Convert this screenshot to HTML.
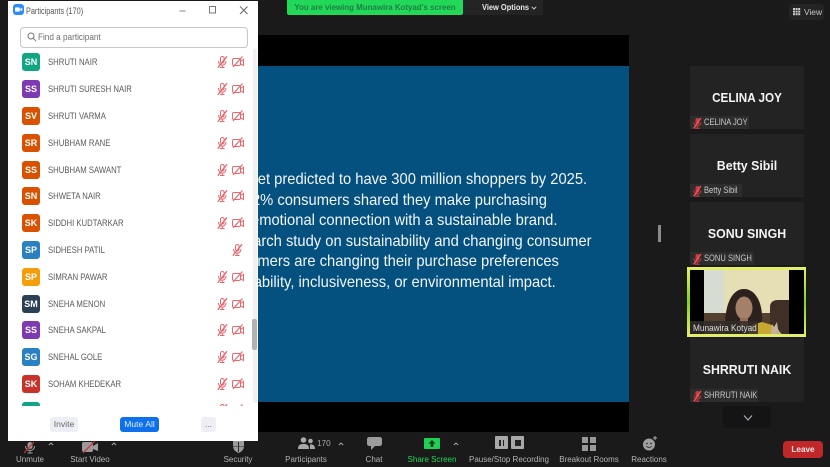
<!DOCTYPE html>
<html>
<head>
<meta charset="utf-8">
<style>
html,body{margin:0;padding:0;width:830px;height:467px;overflow:hidden;background:#1a1a1a;font-family:"Liberation Sans",sans-serif}
div,span{position:absolute;white-space:nowrap}
svg{position:absolute;overflow:visible}
.av{left:14px;width:18px;height:18px;border-radius:3px;color:#fff;font-weight:bold;font-size:9px;line-height:18px;text-align:center;filter:blur(.2px)}
.nm{left:39.5px;font-size:9px;line-height:12px;color:#5a5a5a;filter:blur(.2px);transform:scaleX(.86);transform-origin:left center}
.ln{right:0;color:#f2f6f9;font-size:15.8px;line-height:20px;filter:blur(.25px);transform:scaleX(.933);transform-origin:right center}
.tile{left:690px;width:114px;background:#232323}
.big{left:0;width:114px;text-align:center;color:#f4f4f4;font-weight:bold;font-size:13px;line-height:16px;filter:blur(.2px);transform:scaleX(.95)}
.lab{left:0;bottom:0;height:13px;background:#2d2d2d;color:#c8c8c8;font-size:9px;line-height:13px}
.lab span{left:14px;top:0;transform:scaleX(.84);transform-origin:left center;filter:blur(.15px)}
.tb{top:454px;font-size:8.6px;line-height:11px;color:#b4b4b4;transform:translateX(-50%) scaleX(.93);filter:blur(.2px)}
</style>
</head>
<body>
<svg width="0" height="0" style="position:absolute">
<defs>
<g id="m" fill="none" stroke="#e8666c" stroke-width="1"><rect x="3.5" y="0.5" width="3.6" height="6.5" rx="1.8"/><path d="M1.5 5c0 5.600 7.500 5.600 7.500 0M5.300 9v2.500M3 11.500h4.500"/><path d="M10 .3L.8 11.700" stroke-width="1.300"/></g>
<g id="c" fill="none" stroke="#e8666c" stroke-width="1"><rect x="0.500" y="2.500" width="8" height="7" rx="1.500"/><path d="M8.500 5.500l3-2.200v6.200l-3-1.800"/><path d="M10.500 .5L1 11" stroke-width="1.200"/></g>
<g id="rm"><rect x="2.500" y="0" width="3.800" height="6.500" rx="1.900" fill="#d8383c"/><path d="M1 4.500c0 4.500 6.800 4.500 6.800 0M4.400 8v2M2.200 10.300h4.400" fill="none" stroke="#d8383c" stroke-width="1"/><path d="M7.800 0L.8 10.300" stroke="#e8555a" stroke-width="1.400"/></g>
</defs>
</svg>

<!-- slide -->
<div style="left:258px;top:35px;width:371px;height:397px;background:#000"></div>
<div style="left:258px;top:66px;width:371px;height:336px;background:#04507f"></div>
<div style="left:0;top:0;width:587px;height:467px;overflow:hidden"><div class="ln" style="top:170px">market predicted to have 300 million shoppers by 2025.</div></div>
<div style="left:0;top:0;width:546.500px;height:467px;overflow:hidden"><div class="ln" style="top:190.500px">72% consumers shared they make purchasing</div></div>
<div style="left:0;top:0;width:557px;height:467px;overflow:hidden"><div class="ln" style="top:211px">emotional connection with a sustainable brand.</div></div>
<div style="left:0;top:0;width:592px;height:467px;overflow:hidden"><div class="ln" style="top:231.500px">Research study on sustainability and changing consumer</div></div>
<div style="left:0;top:0;width:558.500px;height:467px;overflow:hidden"><div class="ln" style="top:252px">customers are changing their purchase preferences</div></div>
<div style="left:0;top:0;width:556px;height:467px;overflow:hidden"><div class="ln" style="top:273px">sustainability, inclusiveness, or environmental impact.</div></div>

<!-- top bar -->
<div style="left:287px;top:0;width:176px;height:15px;background:#22d859;border-radius:0 0 2px 2px"></div>
<div style="left:287px;top:0;width:176px;height:14px;color:#1f7f42;font-weight:bold;font-size:8.600px;line-height:14px;text-align:center;transform:scaleX(.92);filter:blur(.2px)">You are viewing Munawira Kotyad's screen</div>
<div style="left:463px;top:0;width:80px;height:15px;background:#242424"></div>
<div style="left:481.500px;top:1px;color:#e6e6e6;font-weight:bold;font-size:8.400px;line-height:12px;filter:blur(.15px);transform:scaleX(.89);transform-origin:left center">View Options</div>
<svg style="left:531px;top:5.500px" width="6" height="4"><path d="M.8.8L3 3l2.200-2.200" fill="none" stroke="#ccc" stroke-width="1"/></svg>
<div style="left:789px;top:4px;width:35px;height:16px;background:#242424;border-radius:3px"></div>
<svg style="left:793px;top:8px" width="8" height="7"><g fill="#ccc"><rect width="2" height="2"/><rect x="2.600" width="2" height="2"/><rect x="5.200" width="2" height="2"/><rect y="2.600" width="2" height="2"/><rect x="2.600" y="2.600" width="2" height="2"/><rect x="5.200" y="2.600" width="2" height="2"/><rect y="5.200" width="2" height="2"/><rect x="2.600" y="5.200" width="2" height="2"/><rect x="5.200" y="5.200" width="2" height="2"/></g></svg>
<div style="left:804px;top:6px;color:#c8c8c8;font-size:8.400px;line-height:12px">View</div>

<!-- gallery -->
<div style="left:657.500px;top:225px;width:3px;height:17px;background:#8a8a8a"></div>
<div class="tile" style="top:66px;height:63px"><div class="big" style="top:23.500px;transform:scaleX(.9)">CELINA JOY</div><div class="lab" style="width:59px"><span>CELINA JOY</span></div><svg style="left:3px;top:51.500px" width="9" height="11"><use href="#rm"/></svg></div>
<div class="tile" style="top:134px;height:63px"><div class="big" style="top:23.500px">Betty Sibil</div><div class="lab" style="width:52px"><span>Betty Sibil</span></div><svg style="left:3px;top:51.500px" width="9" height="11"><use href="#rm"/></svg></div>
<div class="tile" style="top:202px;height:63px"><div class="big" style="top:23.500px">SONU SINGH</div><div class="lab" style="width:64px"><span>SONU SINGH</span></div><svg style="left:3px;top:51.500px" width="9" height="11"><use href="#rm"/></svg></div>
<div class="tile" style="top:338px;height:64px"><div class="big" style="top:24px">SHRRUTI NAIK</div><div class="lab" style="width:68px"><span>SHRRUTI NAIK</span></div><svg style="left:3px;top:52.500px" width="9" height="11"><use href="#rm"/></svg></div>

<!-- active video -->
<div style="left:687px;top:267px;width:119px;height:70px;background:linear-gradient(#e6f06a,#7fd420 50%,#e6f06a)"></div>
<div style="left:690px;top:270px;width:114px;height:64px;background:#000;overflow:hidden">
  <svg style="left:14px;top:0" width="85" height="64" viewBox="0 0 85 64">
    <rect width="85" height="64" fill="#e6dfb6"/>
    <rect width="20" height="44" fill="#d6dcd2"/>
    <path d="M0 43H85V64H0z" fill="#54402f"/>
    <path d="M66 36q1-6 8-6h11V64H66z" fill="#3f2f26"/>
    <path d="M22 64C19 40 26 19 40 19 53 19 59 36 58 50L60 64z" fill="#2c211f"/>
    <ellipse cx="40" cy="38" rx="8.500" ry="11.500" fill="#a67f69"/>
    <path d="M36 48h8v8h-8z" fill="#96705c"/>
    <path d="M44 64L47 55 58 52 68 55 78 64z" fill="#c9a832"/>
    <path d="M67 64l1-10 2 3 3-5 1 7 3 5z" fill="#c4b19e"/>
  </svg>
  <div style="left:0;bottom:0;height:13px;width:68px;background:rgba(50,45,40,.85)"></div>
  <div style="left:2.500px;bottom:0;height:13px;color:#ddd;font-size:9.400px;line-height:13px;transform:scaleX(.88);transform-origin:left center;filter:blur(.15px)">Munawira Kotyad</div>
</div>

<div style="left:723px;top:406px;width:48px;height:22px;background:#141414;border-radius:3px"></div>
<svg style="left:741.500px;top:414px" width="12" height="8"><path d="M2 1.500L6 6 10 1.500" fill="none" stroke="#aab" stroke-width="1.200"/></svg>

<!-- participants panel -->
<div style="left:8px;top:1px;width:250px;height:440px;background:#fff;overflow:hidden">
  <svg style="left:5px;top:3px" width="11" height="11" viewBox="0 0 11 11"><rect width="11" height="11" rx="3" fill="#2d8cff"/><rect x="2" y="3.400" width="4.800" height="4.200" rx="1" fill="#fff"/><path d="M7.200 5L9.200 3.600V7.400L7.200 6z" fill="#fff"/></svg>
  <div style="left:17.500px;top:3.500px;font-size:9px;line-height:12px;color:#555;transform:scaleX(.81);transform-origin:left center">Participants (170)</div>
  <svg style="left:171px;top:4px" width="70" height="12"><path d="M.5 6h6" stroke="#999" stroke-width="1.200"/><rect x="30.500" y="1.500" width="6" height="6.500" fill="none" stroke="#777" stroke-width="1"/><path d="M61 1.500l7.500 7.500M68.500 1.500L61 9" stroke="#666" stroke-width="1"/></svg>
  <div style="left:12px;top:26px;width:226px;height:19px;border:1px solid #c4c6d0;border-radius:4px;background:#fff"></div>
  <svg style="left:19px;top:31px" width="10" height="10"><circle cx="4" cy="4" r="3" fill="none" stroke="#777" stroke-width="1"/><path d="M6.200 6.200L9 9" stroke="#777" stroke-width="1"/></svg>
  <div style="left:30px;top:30px;font-size:9.200px;line-height:12px;color:#6e6e6e;transform:scaleX(.89);transform-origin:left center">Find a participant</div>
  <div style="left:244.500px;top:48px;width:4px;height:354px;background:#f1f1f3"></div>
  <div style="left:244px;top:318px;width:5px;height:31px;background:#b3b3b3;border-radius:2px"></div>

  <div style="left:0;top:47px;width:244px;height:358px;overflow:hidden">
    <div class="av" style="top:5px;background:#11a583">SN</div><div class="nm" style="top:8px">SHRUTI NAIR</div>
    <svg style="left:209px;top:8px" width="12" height="12"><use href="#m"/></svg><svg style="left:224px;top:8px" width="12" height="12"><use href="#c"/></svg>
    <div class="av" style="top:32px;background:#7e3ab2">SS</div><div class="nm" style="top:35px">SHRUTI SURESH NAIR</div>
    <svg style="left:209px;top:35px" width="12" height="12"><use href="#m"/></svg><svg style="left:224px;top:35px" width="12" height="12"><use href="#c"/></svg>
    <div class="av" style="top:59px;background:#d85200">SV</div><div class="nm" style="top:62px">SHRUTI VARMA</div>
    <svg style="left:209px;top:62px" width="12" height="12"><use href="#m"/></svg><svg style="left:224px;top:62px" width="12" height="12"><use href="#c"/></svg>
    <div class="av" style="top:86px;background:#d85200">SR</div><div class="nm" style="top:89px">SHUBHAM RANE</div>
    <svg style="left:209px;top:89px" width="12" height="12"><use href="#m"/></svg><svg style="left:224px;top:89px" width="12" height="12"><use href="#c"/></svg>
    <div class="av" style="top:112.500px;background:#d85200">SS</div><div class="nm" style="top:115.500px">SHUBHAM SAWANT</div>
    <svg style="left:209px;top:115.500px" width="12" height="12"><use href="#m"/></svg><svg style="left:224px;top:115.500px" width="12" height="12"><use href="#c"/></svg>
    <div class="av" style="top:139px;background:#d85200">SN</div><div class="nm" style="top:142px">SHWETA NAIR</div>
    <svg style="left:209px;top:142px" width="12" height="12"><use href="#m"/></svg><svg style="left:224px;top:142px" width="12" height="12"><use href="#c"/></svg>
    <div class="av" style="top:166px;background:#d85200">SK</div><div class="nm" style="top:169px">SIDDHI KUDTARKAR</div>
    <svg style="left:209px;top:169px" width="12" height="12"><use href="#m"/></svg><svg style="left:224px;top:169px" width="12" height="12"><use href="#c"/></svg>
    <div class="av" style="top:193px;background:#2a80c0">SP</div><div class="nm" style="top:196px">SIDHESH PATIL</div>
    <svg style="left:224px;top:196px" width="12" height="12"><use href="#m"/></svg>
    <div class="av" style="top:219.500px;background:#f59e0b">SP</div><div class="nm" style="top:222.500px">SIMRAN PAWAR</div>
    <svg style="left:209px;top:222.500px" width="12" height="12"><use href="#m"/></svg><svg style="left:224px;top:222.500px" width="12" height="12"><use href="#c"/></svg>
    <div class="av" style="top:246.500px;background:#2b3f55">SM</div><div class="nm" style="top:249.500px">SNEHA MENON</div>
    <svg style="left:209px;top:249.500px" width="12" height="12"><use href="#m"/></svg><svg style="left:224px;top:249.500px" width="12" height="12"><use href="#c"/></svg>
    <div class="av" style="top:273px;background:#7e3ab2">SS</div><div class="nm" style="top:276px">SNEHA SAKPAL</div>
    <svg style="left:209px;top:276px" width="12" height="12"><use href="#m"/></svg><svg style="left:224px;top:276px" width="12" height="12"><use href="#c"/></svg>
    <div class="av" style="top:300px;background:#2a80c0">SG</div><div class="nm" style="top:303px">SNEHAL GOLE</div>
    <svg style="left:209px;top:303px" width="12" height="12"><use href="#m"/></svg><svg style="left:224px;top:303px" width="12" height="12"><use href="#c"/></svg>
    <div class="av" style="top:327px;background:#c8322a">SK</div><div class="nm" style="top:330px">SOHAM KHEDEKAR</div>
    <svg style="left:209px;top:330px" width="12" height="12"><use href="#m"/></svg><svg style="left:224px;top:330px" width="12" height="12"><use href="#c"/></svg>
    <div class="av" style="top:354px;background:#11a583"></div>
    <svg style="left:209px;top:356px" width="12" height="12"><use href="#m"/></svg><svg style="left:224px;top:356px" width="12" height="12"><use href="#c"/></svg>
  </div>

  <div style="left:42px;top:416px;width:28px;height:15px;background:#eeeef6;border-radius:3px;color:#666;font-size:8.600px;line-height:15px;text-align:center">Invite</div>
  <div style="left:112px;top:416px;width:39px;height:15px;background:#0e71eb;border-radius:3px;color:#e4eefc;font-size:8.600px;line-height:15px;text-align:center">Mute All</div>
  <div style="left:193px;top:416px;width:15px;height:15px;background:#eeeef6;border-radius:3px;color:#666;font-size:8px;line-height:16px;text-align:center">...</div>
</div>

<!-- toolbar -->
<svg style="left:22px;top:441px" width="16" height="13"><rect x="5.500" y="1" width="5" height="7" rx="2.500" fill="#9a9a9a"/><path d="M3.500 5c0 6 9 6 9 0M8 9.500V12M5.500 12h5" fill="none" stroke="#9a9a9a" stroke-width="1"/><path d="M12 1L2 12" stroke="#d03030" stroke-width="1.200"/></svg>
<div class="tb" style="left:30px">Unmute</div>
<svg style="left:48px;top:442px" width="6" height="4"><path d="M.8 3L3 1l2.200 2" fill="none" stroke="#aaa" stroke-width="1"/></svg>
<svg style="left:82px;top:441px" width="18" height="12"><rect x="0" y="1" width="11" height="10" rx="2" fill="#9a9a9a"/><path d="M11 5l5-3v8l-5-2z" fill="#9a9a9a"/><path d="M13 0L1 12" stroke="#d03030" stroke-width="1.200"/></svg>
<div class="tb" style="left:90px">Start Video</div>
<svg style="left:111px;top:442px" width="6" height="4"><path d="M.8 3L3 1l2.200 2" fill="none" stroke="#aaa" stroke-width="1"/></svg>

<svg style="left:232px;top:441px" width="13" height="12"><path d="M1 0H12V5C12 9 9 11 6.500 12 4 11 1 9 1 5z" fill="#9a9a9a"/><path d="M6.500 1V11" stroke="#2a2a2a" stroke-width="1"/><path d="M1 5.500H12" stroke="#2a2a2a" stroke-width=".5"/></svg>
<div class="tb" style="left:238px">Security</div>

<svg style="left:298px;top:437px" width="17" height="13"><circle cx="5.500" cy="3" r="2.800" fill="#a8a8a8"/><path d="M0 12c0-4 2-5 5.500-5s5.500 1 5.500 5z" fill="#a8a8a8"/><circle cx="12.500" cy="4" r="2.300" fill="#a8a8a8"/><path d="M12 12h5c0-3-1.500-5-5-4.500z" fill="#a8a8a8"/></svg>
<div style="left:317px;top:438px;font-size:8.200px;line-height:11px;color:#aaa">170</div>
<svg style="left:338px;top:441.500px" width="6" height="4"><path d="M.8 3L3 1l2.200 2" fill="none" stroke="#aaa" stroke-width="1"/></svg>
<div class="tb" style="left:306px">Participants</div>

<svg style="left:367px;top:437px" width="15" height="14"><path d="M2.500 0H12.500Q15 0 15 2.500V6.500Q15 9 12.500 9H8L4 13V9H2.500Q0 9 0 6.500V2.500Q0 0 2.500 0z" fill="#9c9c9c"/></svg>
<div class="tb" style="left:374px">Chat</div>

<div style="left:424px;top:438px;width:16px;height:11px;background:#20d052;border-radius:1px"></div>
<svg style="left:428px;top:440px" width="8" height="7"><path d="M4 0L7.500 3.500H5.300V7H2.700V3.500H.5z" fill="#0a3a1a"/></svg>
<div class="tb" style="left:432px;color:#22d45a">Share Screen</div>
<svg style="left:453px;top:441.500px" width="6" height="4"><path d="M.8 3L3 1l2.200 2" fill="none" stroke="#aaa" stroke-width="1"/></svg>

<div style="left:495px;top:436px;width:13px;height:13px;background:#a8a8a8;border-radius:1px"></div>
<div style="left:499px;top:439.500px;width:1.500px;height:6px;background:#222"></div>
<div style="left:502.500px;top:439.500px;width:1.500px;height:6px;background:#222"></div>
<div style="left:511px;top:436px;width:13px;height:13px;background:#a8a8a8;border-radius:1px"></div>
<div style="left:514.500px;top:439.500px;width:6px;height:6px;background:#222"></div>
<div class="tb" style="left:509px">Pause/Stop Recording</div>

<div style="left:582px;top:437px;width:6px;height:6px;background:#999"></div>
<div style="left:589.500px;top:437px;width:6px;height:6px;background:#999"></div>
<div style="left:582px;top:444.500px;width:6px;height:6px;background:#999"></div>
<div style="left:589.500px;top:444.500px;width:6px;height:6px;background:#999"></div>
<div class="tb" style="left:588.500px">Breakout Rooms</div>

<svg style="left:642px;top:436px" width="16" height="15"><circle cx="7" cy="8.500" r="6" fill="#9e9e9e"/><circle cx="5" cy="7.500" r=".8" fill="#222"/><circle cx="9" cy="7.500" r=".8" fill="#222"/><path d="M4.500 10c1 2 4 2 5 0" fill="none" stroke="#222" stroke-width=".8"/><path d="M13 0v4M11 2h4" stroke="#aaa" stroke-width="1"/></svg>
<div class="tb" style="left:649px">Reactions</div>

<div style="left:783px;top:441px;width:40px;height:17px;background:#c02728;border-radius:4px;color:#f5e6e6;font-weight:bold;font-size:8.200px;line-height:17px;text-align:center">Leave</div>
</body>
</html>
